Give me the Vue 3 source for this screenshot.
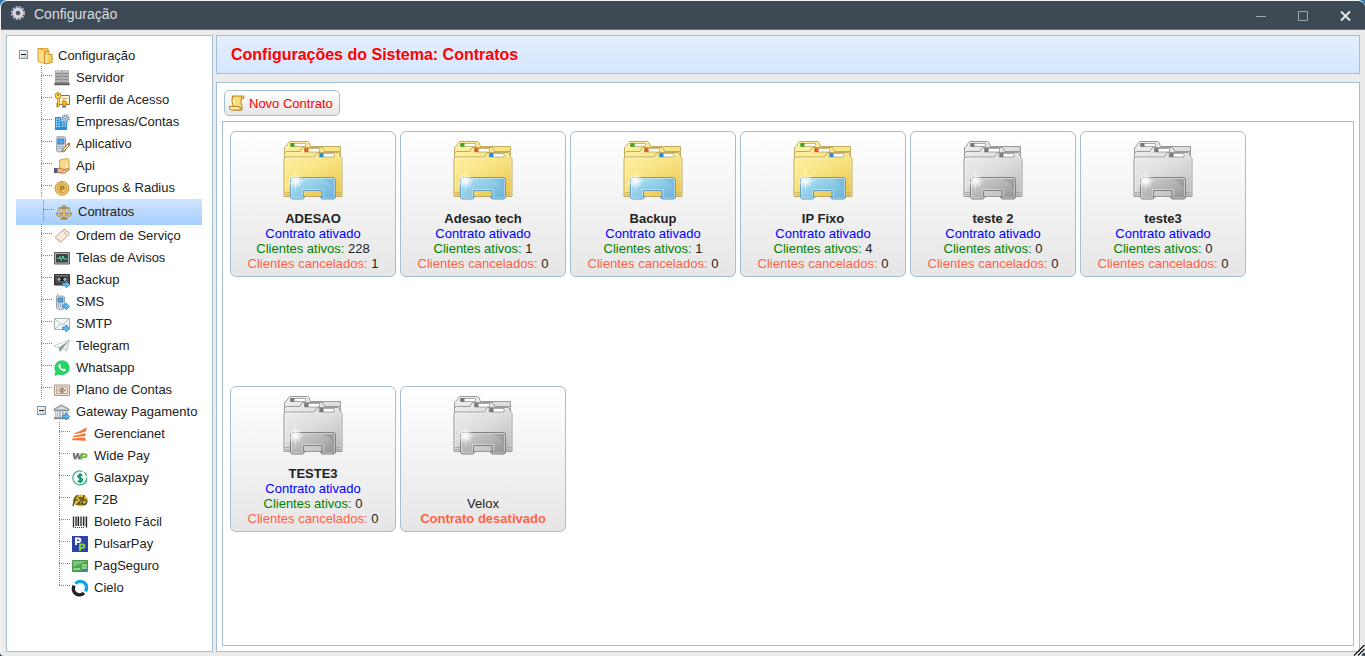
<script setup>
const arrow = '<path d="M8.5 11h3.5V8.8l3.6 3.6-3.6 3.5v-2.2H8.5z" fill="#5cc0f5" stroke="#2f7fc4" stroke-width=".8"/>'

const icons = {
  folder: '<path d="M1.500 1.500h9.500v12H1.500z" fill="#fbd96b" stroke="#dca23c"/><path d="M1 1.200l6.500 2.500v13L1 14.200z" fill="#ffdf85" stroke="#d9932a" stroke-width=".9"/><path d="M7.500 7l1.500-1V3.800h3v3.700h3.200v8L9 17l-1.500-1z" fill="#f7cf5c" stroke="#c58d2a" stroke-width=".9"/><path d="M9.500 7.500v8" stroke="#fff0b8" stroke-width="1.200"/>',
  server: '<path d="M1.500 .8h6v11.700h-6zM8.500 .8h6v11.700h-6z" fill="#b3b3b3" stroke="#9a9a9a" stroke-width=".8"/><path d="M2 3.500h5M9 3.500h5M2 6.500h5M9 6.500h5M2 9.500h5M9 9.500h5" stroke="#8a8a8a"/><path d="M2 1.700h5M9 1.700h5" stroke="#d8d8d8"/><path d="M1 12.500h14l1 2.800H0z" fill="#5c5c5c"/><path d="M1.500 13h13" stroke="#8a8a8a"/>',
  key: '<path d="M4.500 3.500h11v9h-11z" fill="#fff5dc" stroke="#a46b28"/><path d="M8 6.500h5.500M8 8.500h3" stroke="#d0a868"/><path d="M4.500 6v8.500M4.500 12h-2M4.500 14h-2" stroke="#b77911" stroke-width="2.400"/><path d="M4.500 6v8" stroke="#ffd94a"/><circle cx="4" cy="3.600" r="2.900" fill="#ffe05a" stroke="#c0841c"/><circle cx="4" cy="2.900" r=".9" fill="#8b5b17"/><path d="M9 12l-1 4 2-.8 2 .8-.8-4z" fill="#246eb9"/><circle cx="10.500" cy="11.500" r="2.300" fill="#efb525" stroke="#c2861c"/>',
  company: '<path d="M1 3h6v13H1zM7 7h6v9H7z" fill="#2a8fdb"/><path d="M2 5h4M2 7.500h4M2 10h4M2 12.500h4M8 9.500h4M8 12h4" stroke="#bde9ff" stroke-width="1.300"/><path d="M4 4v11M10 8v7" stroke="#1b74b8"/><circle cx="11.300" cy="4.700" r="3.500" fill="#d9e7f5" stroke="#7d9cba" stroke-width="2" stroke-dasharray="1.500 .9"/><circle cx="11.300" cy="4.700" r="2.300" fill="#dce8f3" stroke="#88a4c0"/><circle cx="11.300" cy="4.700" r="1" fill="#7090b0"/>',
  app: '<path d="M3 .8h7.500l1 1v13l-1.200 1H3.800l-1.300-1z" fill="#d5dbe1" stroke="#8e989f"/><path d="M4 3h5.800v5H4z" fill="#5aa6e8" stroke="#3a78b4"/><path d="M4.500 10.500h5M4.500 12.500h5" stroke="#718292" stroke-dasharray="1 1"/><path d="M8 15.500l1-2.700 4.700-4.800 1.700 1.500-4.700 5z" fill="#ffe48d" stroke="#74542c" stroke-width=".8"/><path d="M13.500 7.700l1.300-1.200 1.700 1.600-1.200 1.300z" fill="#ed3f3f"/>',
  api: '<path d="M5.500 2l7.500-1.500 2 1v10H5.500z" fill="#fbd788" stroke="#d6a548"/><path d="M13 5.500v5" stroke="#fff6d5" stroke-width="1.500"/><path d="M0 10h3.500v5H0z" fill="#4b5f86"/><path d="M3.500 10.500l4-.3 2 1.600 5-1.300 1 1.100-5 3.500-7-.2z" fill="#edb583" stroke="#a86833" stroke-width=".8"/>',
  radius: '<circle cx="8" cy="8.300" r="6.900" fill="#efc565" stroke="#cb9536"/><circle cx="8" cy="8.300" r="4.500" fill="none" stroke="#c8974a"/><path d="M6.800 11.300v-5h1.500c2.300 0 2.300 2.700 0 2.700H7" fill="none" stroke="#9a671c" stroke-width="1.200"/>',
  scales: '<path d="M8 1v12.500" stroke="#a77935" stroke-width="3.200"/><path d="M8 1.500v12" stroke="#f4d78f" stroke-width="1.400"/><path d="M2.500 4h11" stroke="#a77935" stroke-width="1.600"/><path d="M3 4.500L.8 10M3 4.500L5.200 10M13 4.500L10.800 10M13 4.500l2.200 5.500" stroke="#b28a49" stroke-width=".8"/><path d="M.3 9.500h5.400q-.7 3-2.700 3t-2.700-3zM10.300 9.500h5.400q-.7 3-2.700 3t-2.700-3z" fill="#ebc576" stroke="#9f7435" stroke-width=".8"/><path d="M4.500 14.500h7" stroke="#a77935" stroke-width="2"/>',
  ticket: '<path d="M1 9.500L10.500.8l2 1.700q-.2 1.700 1.800 1.400L16 5.500l-9.500 9-1.600-1.400q.2-1.800-1.700-1.600z" fill="#f7e4d6" stroke="#bda595"/><path d="M8.500 3l5 4.500" stroke="#b79b88" stroke-dasharray="1 1"/><path d="M4 9.500l5-4.500M6 11.500l5-4.800" stroke="#fff8f0"/>',
  screen: '<path d="M.5 2.500h15v11.500H.5z" fill="#b0b0b0" stroke="#5c5c5c"/><path d="M2.500 4.500h11v7.500h-11z" fill="#2c4842" stroke="#444"/><path d="M3 8.500h2l1-2 1.300 4L9 6l1 3h3" fill="none" stroke="#7fe0bd" stroke-width=".9"/>',
  tape: '<path d="M.5 2.500h15v10.500H.5z" fill="#454545" stroke="#303030"/><path d="M1 3.500h14" stroke="#777"/><path d="M2.500 5h11v4.500h-11z" fill="#171717" stroke="#777" stroke-width=".6"/><circle cx="5" cy="7.200" r="1.500" fill="#ddd"/><circle cx="11" cy="7.200" r="1.500" fill="#ddd"/><path d="M4.500 7.200h1M10.500 7.200h1" stroke="#333"/>' + arrow,
  sms: '<path d="M3.500 1.500V0" stroke="#888"/><path d="M3 2h6l1.500 1v11l-1 1.300H3.800L2.500 14V3z" fill="#d5dce3" stroke="#98a3ac"/><path d="M4.200 4h4.600v4H4.200z" fill="#5aa6e8" stroke="#3a78b4"/><path d="M4 10h5M4 12h5" stroke="#78838e" stroke-dasharray="1 1"/>' + arrow,
  mail: '<path d="M.5 2.500h15v11H.5z" fill="#f3f8f7" stroke="#a6b6b6"/><path d="M1 3l7 6 7-6M1 13l5.500-5M15 13L9.500 8" fill="none" stroke="#b1c0c0"/>' + arrow,
  plane: '<path d="M0 8L15.500 2l-3 11L8.500 10.500 6 13.500l-1-4z" fill="#e9eeee" stroke="#aab6b6" stroke-width=".8"/><path d="M5 9.500L15 2.500 8.500 10.200 6 13.500z" fill="#8b9b9b"/><path d="M1 8L14 2.800 5 9z" fill="#fff"/>',
  whats: '<path d="M.2 15.700l1.300-4.200A7.600 7.400 0 1 1 5 14.500z" fill="#25d366"/><path d="M5.200 4.200c-1.600 1.100-.8 3 .8 4.700 2 2.300 4 3.100 5.200 1.900.9-1 .8-1.300-.1-1.800-1.300-.8-1.500-.5-2.200.3-1-.3-2.200-1.500-2.500-2.500.9-.6.8-.9.200-2.100-.4-.7-.7-.8-1.400-.5z" fill="#fff"/>',
  money: '<path d="M.5 3h15v10.500H.5z" fill="#f2e4d6" stroke="#a99a8c"/><path d="M2.500 5h11v6.500h-11z" fill="none" stroke="#b8a797"/><circle cx="8" cy="8.300" r="2.300" fill="#d4bea8" stroke="#a08c78"/><path d="M8 6.500v3.600M4 8.200h1M11 8.200h1" stroke="#69594c"/>',
  bank: '<path d="M0 5L7.500.8 15 5v1.500H0z" fill="#b9bdc2" stroke="#7c8288" stroke-width=".8"/><path d="M3 5l4.500-2.500L12 5z" fill="#dfe2e5"/><path d="M2.500 7v6M5.800 7v6M9.200 7v6M12.500 7v6" stroke="#868c92" stroke-width="2.100"/><path d="M2.500 7v6M5.800 7v6M9.200 7v6M12.500 7v6" stroke="#e9ecee" stroke-width=".9"/><path d="M0 14.200h15" stroke="#868d93" stroke-width="2.200"/>' + arrow,
  geren: '<path d="M3 7Q9 5 14.800 1.300L13.800 5.600Q9 7.300 2.300 8.200zM1.500 9.800Q8 8.900 13.600 6.900L13.200 10Q7 11 .9 11.200zM.3 12.500q6.500-.3 12.800-1L13.800 14.800Q7 14 .3 14.300z" fill="#f9722e"/>',
  wide: '<path d="M.5 5h2.300l.6 3.500L5 5h2l.6 3.500L9.200 5h2L8.300 11.500H6.200L5.600 8.500 4 11.500H1.900z" fill="#777"/><path d="M8.700 11.500L10.500 6.300h2.800c1.800 0 1.500 3-.5 3H10" fill="none" stroke="#76bd45" stroke-width="2.100"/>',
  galax: '<path d="M10.500 1.400A7 7 0 1 0 14.800 7.500M12.500 2.300a7 7 0 0 1 2.200 3.500M14.800 9.500a7 7 0 0 1-3.300 4.500" fill="none" stroke="#37b584" stroke-width="1.300"/><path d="M10.500 5.500Q8 4.200 6.300 5.500q-1 1.900 1.700 2.500 3.300.8 2 3-1.800 1.300-4.300 0M8.100 3.300v10" fill="none" stroke="#159465" stroke-width="1.700"/>',
  f2b: '<ellipse cx="8.500" cy="8.500" rx="7.500" ry="6" fill="#e4bd27"/><path d="M1 14l2.200-8.200Q4 3.300 6 3.700M1.500 8h4M6.300 6.500q3.800-2 3.200.6-.6 1.900-4 5h4.300M12 3l-2 9q4 1.400 4.500-1.700.4-3.300-3.500-2.300" fill="none" stroke="#55532d" stroke-width="1.500"/>',
  bars: '<path d="M1.500 2.500v11M4 2.500v9.500M6.500 2.500v9.500M9 2.500v9.500M11.500 2.500v9.500M14.500 2.500v11" stroke="#252525" stroke-width="1.300"/><path d="M5.200 2.500v9.500M13 2.500v9.500" stroke="#555" stroke-width=".7"/><path d="M3 13.500h10" stroke="#333" stroke-dasharray="1 1"/>',
  pulsar: '<path d="M0 0h16v16H0z" fill="#2e43a8"/><path d="M4 9V2.500h2.500c2.500 0 2.500 3.500 0 3.500H4" fill="none" stroke="#fff" stroke-width="1.900"/><path d="M8 15V8.500h2.500c2.500 0 2.500 3.500 0 3.500H8" fill="none" stroke="#83cf45" stroke-width="1.900"/>',
  card: '<path d="M.5 2.500h15v11H.5z" fill="#4ba84c" stroke="#4a9650"/><path d="M1 3h14L1 9z" fill="#79c575"/><path d="M1.500 11H8" stroke="#e6f5df"/><path d="M10 6.500h5v1.800h-5z" fill="#b9dcae"/><path d="M10 10h5" stroke="#e9eed0"/><path d="M10 12h5" stroke="#3978ba" stroke-width="1.600"/>',
  cielo: '<path d="M3.500 3.800A6.100 6.100 0 0 1 13.300 11.300" fill="none" stroke="#08a8e8" stroke-width="3.300"/><path d="M2.200 5.600A6.100 6.100 0 0 0 11.900 12.900" fill="none" stroke="#222326" stroke-width="3.500"/>'
}

const menu = [
  { label: 'Configuração', icon: 'folder', level: 0, open: true },
  { label: 'Servidor', icon: 'server', level: 1 },
  { label: 'Perfil de Acesso', icon: 'key', level: 1 },
  { label: 'Empresas/Contas', icon: 'company', level: 1 },
  { label: 'Aplicativo', icon: 'app', level: 1 },
  { label: 'Api', icon: 'api', level: 1 },
  { label: 'Grupos & Radius', icon: 'radius', level: 1 },
  { label: 'Contratos', icon: 'scales', level: 1, selected: true },
  { label: 'Ordem de Serviço', icon: 'ticket', level: 1 },
  { label: 'Telas de Avisos', icon: 'screen', level: 1 },
  { label: 'Backup', icon: 'tape', level: 1 },
  { label: 'SMS', icon: 'sms', level: 1 },
  { label: 'SMTP', icon: 'mail', level: 1 },
  { label: 'Telegram', icon: 'plane', level: 1 },
  { label: 'Whatsapp', icon: 'whats', level: 1 },
  { label: 'Plano de Contas', icon: 'money', level: 1 },
  { label: 'Gateway Pagamento', icon: 'bank', level: 1, open: true },
  { label: 'Gerencianet', icon: 'geren', level: 2 },
  { label: 'Wide Pay', icon: 'wide', level: 2 },
  { label: 'Galaxpay', icon: 'galax', level: 2 },
  { label: 'F2B', icon: 'f2b', level: 2 },
  { label: 'Boleto Fácil', icon: 'bars', level: 2 },
  { label: 'PulsarPay', icon: 'pulsar', level: 2 },
  { label: 'PagSeguro', icon: 'card', level: 2 },
  { label: 'Cielo', icon: 'cielo', level: 2, last: true }
]

const contracts = [
  { name: 'ADESAO', active: 228, cancelled: 1, inUse: true },
  { name: 'Adesao tech', active: 1, cancelled: 0, inUse: true },
  { name: 'Backup', active: 1, cancelled: 0, inUse: true },
  { name: 'IP Fixo', active: 4, cancelled: 0, inUse: true },
  { name: 'teste 2', active: 0, cancelled: 0 },
  { name: 'teste3', active: 0, cancelled: 0 },
  { name: 'TESTE3', active: 0, cancelled: 0 },
  { name: 'Velox', disabled: true }
]
</script>

<template>
  <div class="desktop">
    <div class="window">
      <header class="titlebar">
        <svg class="gear" viewBox="0 0 16 16">
          <circle cx="8" cy="8" r="6" fill="none" stroke="#b4b6c2" stroke-width="2.200" stroke-dasharray="2 1.140" />
          <circle cx="8" cy="8" r="3.900" fill="#85858d" stroke="#dcdce8" stroke-width="2.800" />
          <circle cx="8" cy="8" r="2" fill="#55565f" />
        </svg>
        <span class="title">Configuração</span>
        <svg class="controls" viewBox="0 0 96 12">
          <path d="M1 6.500h10M43.500 1.500h9v9h-9z" fill="none" stroke="#a4a5a7" />
          <path d="M86 1.500l9 9M95 1.500l-9 9" stroke="#e9e9e9" stroke-width="1.900" />
        </svg>
      </header>

      <main class="body">
        <nav class="tree">
          <div
            v-for="item in menu"
            :key="item.label"
            class="row"
            :class="['level' + item.level, { selected: item.selected }]"
          >
            <span v-if="item.open" class="lead"><i class="toggle"></i></span>
            <span v-else class="lead guide" :class="{ last: item.last }"></span>
            <svg class="icon" :viewBox="item.level ? '0 0 16 16' : '0 0 16 18'" v-html="icons[item.icon]"></svg>
            <span class="label">{{ item.label }}</span>
          </div>
        </nav>

        <div class="content">
          <h1 class="heading">Configurações do Sistema: Contratos</h1>
          <section class="panel">
            <button class="new">
              <svg viewBox="0 0 16 16">
                <path d="M3.500 1h11q1 1 0 2.500h-2q-1.500 3 .5 8v3.500H4q1-2 0-4.500Q2 6 3.500 1z" fill="#f5dc78" stroke="#b9801f" />
                <path d="M4 1q-1 1.500.5 2.500M12.500 3.500V1.300" fill="none" stroke="#b88021" />
                <path d="M.5 11.500h9.500v1.200h2V15H2Q.3 14.500.5 11.500z" fill="#fff0a9" stroke="#b9801f" />
                <path d="M5 3.500q-1 3 .5 6" fill="none" stroke="#fff6c9" stroke-width="1.300" />
              </svg>
              Novo Contrato
            </button>
            <div class="grid">
              <article v-for="c in contracts" :key="c.name" class="card">
                <svg class="folders" :class="{ grey: !c.inUse }" viewBox="0 0 64 64">
                  <defs>
                    <linearGradient id="paper" x2=".7" y2="1">
                      <stop stop-color="#fff2a8" /><stop offset=".5" stop-color="#f8e483" /><stop offset="1" stop-color="#ecc951" />
                    </linearGradient>
                    <linearGradient id="paperGrey" x2=".7" y2="1">
                      <stop stop-color="#efefef" /><stop offset=".5" stop-color="#dedede" /><stop offset="1" stop-color="#c0c0c0" />
                    </linearGradient>
                    <linearGradient id="holder" x2="1" y2="1">
                      <stop stop-color="#afe4f2" /><stop offset=".55" stop-color="#8ac8e5" /><stop offset="1" stop-color="#66aed8" />
                    </linearGradient>
                    <linearGradient id="holderGrey" x2="1" y2="1">
                      <stop stop-color="#d0d0d0" /><stop offset=".55" stop-color="#b3b3b3" /><stop offset="1" stop-color="#8f8f8f" />
                    </linearGradient>
                    <radialGradient id="glow">
                      <stop stop-color="#fff" /><stop offset=".3" stop-color="#fff" stop-opacity=".6" /><stop offset="1" stop-color="#fff" stop-opacity="0" />
                    </radialGradient>
                  </defs>
                  <g class="paper">
                    <path d="M3.500 57V8.500L5.500 7 7.500 3.500 9 2.500h17.500l1.500 1L29.500 7.500h30V57z" />
                    <path d="M3.500 57V14l2-1.500h13.500l1.500-3L22 8.500h19l1.500 1 1 3h16V57z" />
                    <path d="M3 57.500V19.500L4.500 18h29l1.500-3L36.500 13.500H57l1.500 1 1 3.500 1.500 1.500v38z" />
                  </g>
                  <path class="shine" d="M4.500 57V20l1-1H34l2.500-4h20.500l1.500 3.500 1.500 1V57" />
                  <g class="tag"><path d="M9.500 4.500h15v3h-15zM23.500 9.500h15v3.500h-15zM38 14.500h15V18H38z" /></g>
                  <path class="t1" d="M9.500 4h4v3.800h-4z" /><path class="t2" d="M23.500 9.200h4V13h-4z" /><path class="t3" d="M38.500 14.200h4V18h-4z" />
                  <path class="line" d="M4 55.500h6M55 55.500h5.500M4 53.500h6M55 53.500h5.500" />
                  <path class="holder" d="M9.500 41q0-2.500 2.500-2.500h40q2.500 0 2.500 2.500v17.500L53 60H41l-2-2.500h2V51.500H22.500v6H24L22 60H11l-1.500-1.500z" />
                  <path class="curve" d="M10.500 39.500h30q10 4 13 12V40z" />
                  <path class="sheen" d="M10.500 57.500V40.500l1-1h41l1 1v17l-1.500 1.500H41.500M22.500 59H11.500l-1-1.500M21.500 57v-6.500h21V57" />
                  <circle cx="14.500" cy="42" r="8" fill="url(#glow)" />
                  <path class="star" d="M14.500 28l.7 11.500 5-4.500-4 5.700 9.800 1.300-9.800.8 4.300 5-5.300-3.800-.7 11-.7-11-5.300 4.500 4.300-5.500L1 48l11-6-4-5.500 5.500 3z" />
                </svg>
                <div class="info">
                  <template v-if="c.disabled">
                    <div>{{ c.name }}</div>
                    <div class="off">Contrato desativado</div>
                  </template>
                  <template v-else>
                    <b>{{ c.name }}</b>
                    <div class="on">Contrato ativado</div>
                    <div><span class="active">Clientes ativos:</span> {{ c.active }}</div>
                    <div><span class="cancelled">Clientes cancelados:</span> {{ c.cancelled }}</div>
                  </template>
                </div>
              </article>
            </div>
          </section>
        </div>
      </main>
      <svg class="resizer" viewBox="0 0 12 12">
        <path d="M1 11.500L11.500 1M5 11.500L11.500 5M9 11.500L11.500 9" stroke="#111" stroke-width="1.100" />
      </svg>
    </div>
  </div>
</template>

<style>
body {
  overflow: hidden;
}
</style>

<style scoped>
.desktop {
  box-sizing: border-box;
  height: 656px;
  background: linear-gradient(#2b7ab5 0 50%, #2a3a48 50%);
  font: 13px/15px "Liberation Sans", Arial, sans-serif;
  color: #222;
}
.window {
  position: relative;
  box-sizing: border-box;
  display: flex;
  flex-direction: column;
  height: 656px;
  overflow: hidden;
  border-top: 1px solid #f1f5f7;
  border-left: 1px solid #f3f3f3;
  border-radius: 7px 7px 4px 4px;
  background: #ebebeb;
}
.titlebar {
  box-sizing: border-box;
  display: flex;
  align-items: center;
  height: 29px;
  padding: 0 14px 0 9px;
  border-bottom: 1px solid #1c93ac;
  background: #3d4a55;
  color: #d9dde0;
  font-size: 14px;
}
.gear {
  width: 16px;
  height: 16px;
  margin: -4px 8px 0 0;
}
.title {
  margin-top: -1px;
}
.controls {
  width: 96px;
  height: 12px;
  margin: 2px 0 0 auto;
}
.body {
  display: flex;
  flex: 1;
  gap: 3px;
  padding: 5px 5px 4px;
}
.tree {
  box-sizing: border-box;
  width: 207px;
  padding: 8px 10px 0 9px;
  border: 1px solid #a4bed4;
  background: #fff;
}
.row {
  box-sizing: border-box;
  display: flex;
  align-items: center;
  height: 22px;
  white-space: nowrap;
}
.level1 {
  padding-left: 18px;
}
.level2 {
  padding-left: 36px;
}
.selected {
  height: 26px;
  margin: 1px 0 -1px;
  padding: 1px 2px 3px 20px;
  background: linear-gradient(#d1e5fe, #a3cefe);
}
.lead {
  width: 20px;
  height: 100%;
  display: flex;
  align-items: center;
}
.toggle {
  box-sizing: border-box;
  width: 9px;
  height: 9px;
  margin: -2px 0 0 3px;
  border: 1px solid #8299b2;
  background: linear-gradient(#222, #222) center / 5px 1px no-repeat, linear-gradient(135deg, #fff, #d2cec0);
}
.guide {
  width: 13px;
  margin-left: 7px;
  background:
    repeating-linear-gradient(90deg, #808080 0 1px, transparent 1px 2px) 0 9px / 11px 1px no-repeat,
    repeating-linear-gradient(#808080 0 1px, transparent 1px 2px) 0 0 / 1px 100% no-repeat;
}
.guide.last {
  background-size: 11px 1px, 1px 10px;
}
.icon {
  width: 16px;
  height: 16px;
  margin: 2px 6px 0 0;
  overflow: visible;
}
.level0 .icon {
  height: 18px;
  margin: 1px 5px 0 1px;
}
.content {
  display: flex;
  flex: 1;
  flex-direction: column;
  gap: 8px;
}
.heading {
  box-sizing: border-box;
  height: 39px;
  margin: 0;
  padding-left: 14px;
  border: 1px solid #a4bed4;
  background: linear-gradient(#e4effe, #d5e6fe);
  color: #f00;
  font-size: 16px;
  line-height: 37px;
}
.panel {
  box-sizing: border-box;
  display: flex;
  flex: 1;
  flex-direction: column;
  gap: 5px;
  padding: 7px 5px 5px;
  border: 1px solid #a4bed4;
  background: #fff;
}
.new {
  box-sizing: border-box;
  display: flex;
  align-items: center;
  gap: 4px;
  width: 116px;
  height: 26px;
  margin-left: 2px;
  padding: 0 0 0 4px;
  border: 1px solid #a4bed4;
  border-radius: 5px;
  background: linear-gradient(#fff, #e6e6e6);
  color: #f00;
  font: inherit;
  white-space: nowrap;
}
.new svg {
  width: 16px;
  height: 16px;
}
.grid {
  display: grid;
  flex: 1;
  grid-template-columns: repeat(6, 166px);
  grid-auto-rows: 146px;
  gap: 109px 4px;
  align-content: start;
  padding: 9px 7px;
  border: 1px solid #a4bed4;
}
.card {
  box-sizing: border-box;
  display: flex;
  flex-direction: column;
  align-items: center;
  justify-content: space-between;
  padding: 7px 0 5px;
  border: 1px solid #a4bed4;
  border-radius: 6px;
  background: linear-gradient(#fff, #e6e6e6);
}
.folders {
  width: 64px;
  height: 64px;
}
.info {
  text-align: center;
}
.on {
  color: #00f;
}
.active {
  color: green;
}
.cancelled,
.off {
  color: tomato;
}
.off {
  font-weight: bold;
}
.paper {
  fill: url(#paper);
  stroke: #c0ab63;
}
.holder {
  fill: url(#holder);
  stroke: #659dbb;
}
.curve {
  fill: #5ca7ce;
  opacity: .3;
}
.shine,
.sheen {
  fill: none;
  stroke: #fff;
  opacity: .4;
}
.line {
  stroke: #d3b95c;
}
.tag {
  fill: #fff;
  stroke: #b39c57;
  stroke-width: .7;
}
.t1 {
  fill: #36a819;
}
.t2 {
  fill: #e65a21;
}
.t3 {
  fill: #2b8bd0;
}
.star {
  fill: #fff;
  opacity: .5;
}
.grey .paper {
  fill: url(#paperGrey);
  stroke: #9a9a9a;
}
.grey .holder {
  fill: url(#holderGrey);
  stroke: #808080;
}
.grey .curve {
  fill: #777;
}
.grey .line {
  stroke: #a8a8a8;
}
.grey .tag {
  stroke: #888;
}
.grey .t1,
.grey .t2,
.grey .t3 {
  fill: #777;
}
.resizer {
  position: absolute;
  right: 0;
  bottom: 0;
  width: 12px;
  height: 12px;
}
</style>
